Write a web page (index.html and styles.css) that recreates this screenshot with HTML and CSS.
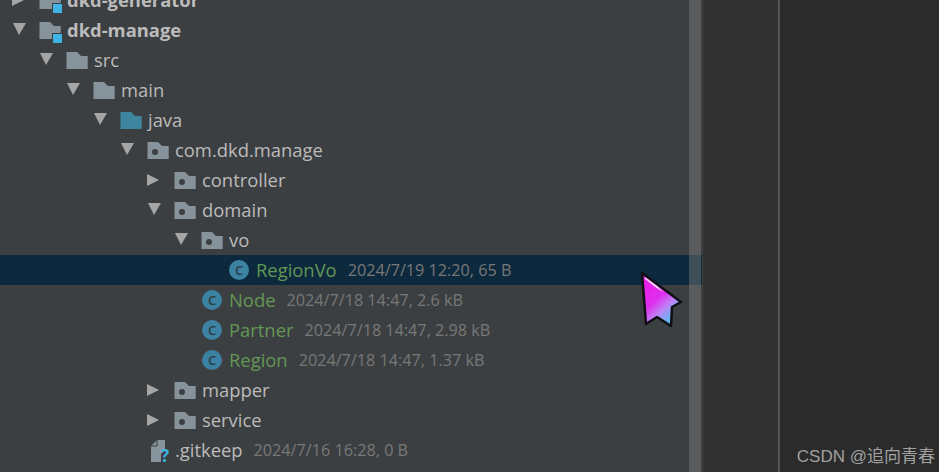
FILE: index.html
```html
<!DOCTYPE html>
<html lang="en">
<head>
    <meta charset="UTF-8">
    <meta name="viewport" content="width=device-width, initial-scale=1.0">
    <title>Project tree</title>
    <link rel="stylesheet" href="styles.css">
</head>
<body>
  <svg class="defs" width="0" height="0">
    <defs>
      <path id="folder" d="M.5 2H11l4 4h6.700v13H.5z"/>
      <g id="module">
        <use href="#folder" fill="#87939a"/>
        <rect x="13" y="13" width="11" height="11" fill="#3c3f41"/>
        <rect x="14" y="14" width="9" height="9" fill="#3db3e6"/>
      </g>
      <g id="package">
        <use href="#folder" fill="#87939a"/>
        <circle cx="8" cy="12" r="3" fill="#3c3f41"/>
      </g>
    </defs>
  </svg>

  <div class="page">
    <div class="tree-panel">
      <div class="tree">
        <div class="row lv0">
          <span class="arrow right"></span>
          <svg class="icon" viewBox="0 0 24 20"><use href="#module"/></svg>
          <span class="name bold">dkd-generator</span>
        </div>
        <div class="row lv0">
          <span class="arrow down"></span>
          <svg class="icon" viewBox="0 0 24 20"><use href="#module"/></svg>
          <span class="name bold">dkd-manage</span>
        </div>
        <div class="row lv1">
          <span class="arrow down"></span>
          <svg class="icon" viewBox="0 0 24 20"><use href="#folder" fill="#87939a"/></svg>
          <span class="name">src</span>
        </div>
        <div class="row lv2">
          <span class="arrow down"></span>
          <svg class="icon" viewBox="0 0 24 20"><use href="#folder" fill="#87939a"/></svg>
          <span class="name">main</span>
        </div>
        <div class="row lv3">
          <span class="arrow down"></span>
          <svg class="icon" viewBox="0 0 24 20"><use href="#folder" fill="#3e86a0"/></svg>
          <span class="name">java</span>
        </div>
        <div class="row lv4">
          <span class="arrow down"></span>
          <svg class="icon" viewBox="0 0 24 20"><use href="#package"/></svg>
          <span class="name">com.dkd.manage</span>
        </div>
        <div class="row lv5">
          <span class="arrow right"></span>
          <svg class="icon" viewBox="0 0 24 20"><use href="#package"/></svg>
          <span class="name">controller</span>
        </div>
        <div class="row lv5">
          <span class="arrow down"></span>
          <svg class="icon" viewBox="0 0 24 20"><use href="#package"/></svg>
          <span class="name">domain</span>
        </div>
        <div class="row lv6">
          <span class="arrow down"></span>
          <svg class="icon" viewBox="0 0 24 20"><use href="#package"/></svg>
          <span class="name">vo</span>
        </div>
        <div class="row lv7 selected">
          <span class="arrow"></span>
          <span class="class-icon">C</span>
          <span class="name added">RegionVo</span>
          <span class="meta">2024/7/19 12:20, 65 B</span>
        </div>
        <div class="row lv6">
          <span class="arrow"></span>
          <span class="class-icon">C</span>
          <span class="name added">Node</span>
          <span class="meta">2024/7/18 14:47, 2.6 kB</span>
        </div>
        <div class="row lv6">
          <span class="arrow"></span>
          <span class="class-icon">C</span>
          <span class="name added">Partner</span>
          <span class="meta">2024/7/18 14:47, 2.98 kB</span>
        </div>
        <div class="row lv6">
          <span class="arrow"></span>
          <span class="class-icon">C</span>
          <span class="name added">Region</span>
          <span class="meta">2024/7/18 14:47, 1.37 kB</span>
        </div>
        <div class="row lv5">
          <span class="arrow right"></span>
          <svg class="icon" viewBox="0 0 24 20"><use href="#package"/></svg>
          <span class="name">mapper</span>
        </div>
        <div class="row lv5">
          <span class="arrow right"></span>
          <svg class="icon" viewBox="0 0 24 20"><use href="#package"/></svg>
          <span class="name">service</span>
        </div>
        <div class="row lv4">
          <span class="arrow"></span>
          <svg class="icon file-icon" viewBox="0 0 24 28">
            <path d="M10 4h8v10l-4 4v8H4V10z" fill="#87939a"/>
            <path d="M10 4v6H4" fill="none" stroke="#3c3f41" stroke-width="1"/>
            <text class="unknown-mark" x="14" y="26">?</text>
          </svg>
          <span class="name">.gitkeep</span>
          <span class="meta">2024/7/16 16:28, 0 B</span>
        </div>
      </div>
      <div class="scrollbar"></div>
    </div>
    <div class="middle-panel"></div>
    <div class="right-panel">
      <span class="watermark">CSDN @追向青春</span>
    </div>
  </div>

  <svg class="cursor" viewBox="0 0 44 58">
    <defs>
      <linearGradient id="cursor-fill" x1="0.2" y1="0.15" x2="0.75" y2="0.95">
        <stop offset="0" stop-color="#e81ee8"/>
        <stop offset="0.4" stop-color="#de30ee"/>
        <stop offset="0.65" stop-color="#c082f5"/>
        <stop offset="1" stop-color="#45c8f5"/>
      </linearGradient>
      <linearGradient id="cursor-shine" x1="0" y1="0" x2="1" y2="0.8">
        <stop offset="0" stop-color="#f4b8f4"/>
        <stop offset="0.6" stop-color="#fbe4fb"/>
        <stop offset="1" stop-color="#e81ee8"/>
      </linearGradient>
    </defs>
    <path d="M2 2L41 31 32 36 31 55 17 46 6 53z" fill="url(#cursor-fill)" stroke="#101014" stroke-width="2.500" stroke-linejoin="round"/>
    <path d="M5 7L26 23" stroke="url(#cursor-shine)" stroke-width="2" fill="none"/>
  </svg>
</body>
</html>
```

FILE: styles.css
```css
body {
  margin: 0;
  height: 472px;
  overflow: hidden;
  background-color: #2b2b2b;
  font-family: "Open Sans", "Noto Sans", "Noto Sans CJK SC", sans-serif;
}

.defs {
  display: block;
  height: 0;
}

.page {
  display: flex;
  height: 472px;
}

.tree-panel {
  position: relative;
  width: 702px;
  overflow: hidden;
  background-color: #3c3f41;
}

.tree {
  margin-top: -15px;
}

.row {
  display: flex;
  align-items: center;
  height: 30px;
  white-space: nowrap;
}

.lv0 { padding-left: 12px; }
.lv1 { padding-left: 39px; }
.lv2 { padding-left: 66px; }
.lv3 { padding-left: 93px; }
.lv4 { padding-left: 120px; }
.lv5 { padding-left: 147px; }
.lv6 { padding-left: 174px; }
.lv7 { padding-left: 201px; }

.selected {
  background-color: #0d293e;
}

.arrow {
  flex: none;
  width: 14px;
  height: 12px;
  margin-right: 13px;
}

.arrow.down {
  margin-bottom: 2px;
  background-color: #a5a5a5;
  clip-path: polygon(1px 0, 100% 0, 50% 100%);
}

.arrow.right {
  background-color: #a5a5a5;
  clip-path: polygon(0 0, 12px 50%, 0 100%);
}

.icon {
  flex: none;
  width: 24px;
  height: 20px;
  margin-right: 4px;
  overflow: visible;
}

.file-icon {
  height: 28px;
  margin-right: 4px;
}

.unknown-mark {
  font-size: 17px;
  font-weight: 700;
  fill: #3db3e6;
}

.class-icon {
  flex: none;
  display: flex;
  align-items: center;
  justify-content: center;
  width: 20px;
  height: 20px;
  margin: 0 7px 0 1px;
  border-radius: 50%;
  background-color: #3b82a3;
  color: #2c3b42;
  font-size: 13px;
  font-weight: 600;
}

.name {
  margin-bottom: 2px;
  font-size: 18.4px;
  color: #bbbbbb;
}

.bold {
  font-weight: 700;
}

.added {
  color: #629755;
}

.meta {
  margin-left: 11px;
  font-size: 16.2px;
  color: #787878;
}

.scrollbar {
  position: absolute;
  top: 0;
  bottom: 0;
  right: 1px;
  width: 12px;
  background-color: rgba(128, 128, 128, 0.44);
}

.middle-panel {
  width: 75px;
  border-left: 2px solid #3f3f3f;
  border-right: 2px solid #555555;
  background-color: #323232;
  margin-left: -1px;
}

.right-panel {
  flex: 1;
  display: flex;
  justify-content: flex-end;
  align-items: flex-end;
  padding: 0 4px 5px 0;
  background-color: #2b2b2b;
}

.watermark {
  font-family: "Liberation Sans", "Noto Sans CJK SC", sans-serif;
  font-size: 17px;
  color: #a0a0a0;
  white-space: nowrap;
}

.cursor {
  position: absolute;
  left: 640px;
  top: 271px;
  width: 44px;
  height: 58px;
  filter: blur(0.4px);
}
```
